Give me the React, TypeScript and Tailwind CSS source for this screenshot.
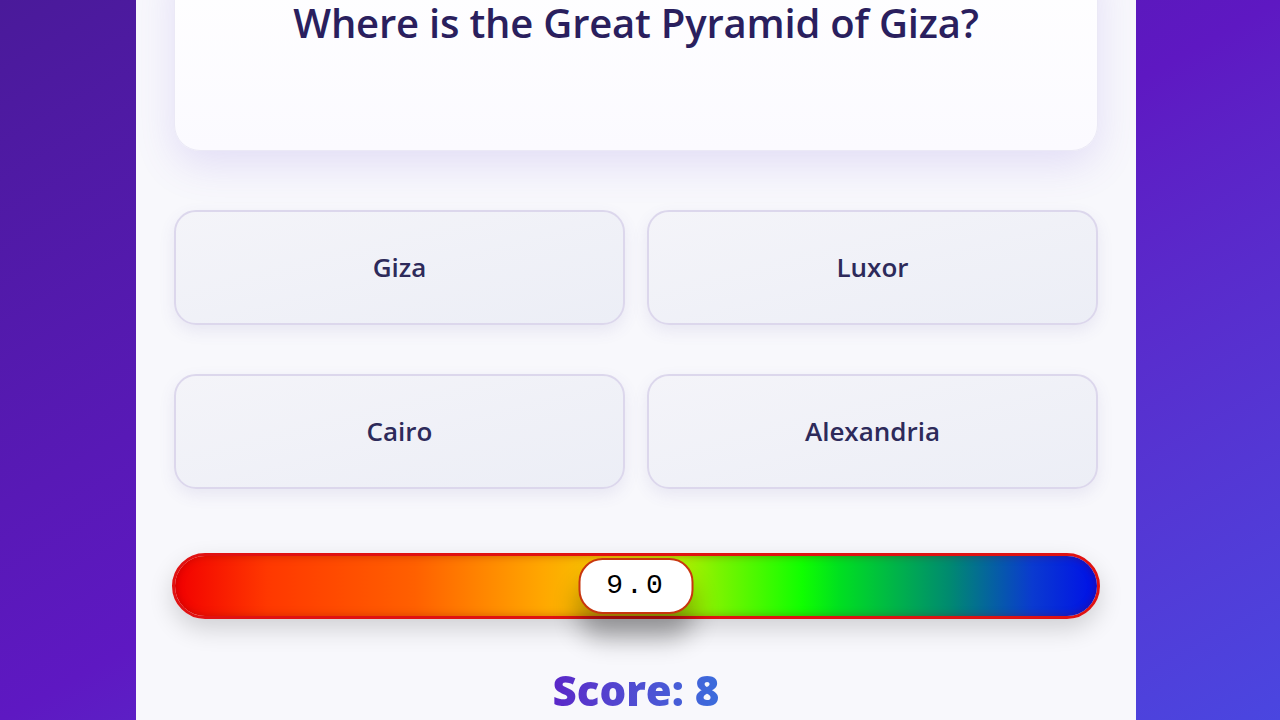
import React from "react";

const answers = ["Giza", "Luxor", "Cairo", "Alexandria"];

const barGradient =
  "linear-gradient(90deg, #f20000 0%, #ff3800 10%, #ff6000 26%, #ffa800 40%, #f4c800 47%, #b0ee00 55%, #7af400 59%, #10ff00 68%, #00e020 72%, #008a70 84%, #0a3ad0 93%, #0010e8 100%)";

export default function App() {
  return (
    <div
      className="h-[720px] w-full overflow-hidden bg-gradient-to-br from-[#4a1a9a] via-[#5e18c2] to-[#4a46e0]"
      style={{ fontFamily: '"Open Sans", "Noto Sans", sans-serif' }}
    >
      <div className="ml-[136px] flex h-full w-[1000px] flex-col bg-[#f8f8fc] px-[38px]">
        {/* question card, scrolled partly off the top */}
        <div className="-mt-[50px] h-[201px] rounded-[26px] border border-[#ebe9f6] bg-gradient-to-b from-white to-[#fbfaff] pt-[52px] text-center shadow-[0_14px_40px_rgba(120,90,220,0.16)]">
          <h1 className="text-[40px] font-semibold leading-[40px] tracking-[-0.2px] text-[#2a1f5e]">
            Where is the Great Pyramid of Giza?
          </h1>
        </div>

        <div className="mt-[59px] grid grid-cols-2 gap-x-[22px] gap-y-[49px]">
          {answers.map((a) => (
            <button
              key={a}
              className="flex h-[115px] items-center justify-center rounded-[22px] border-2 border-[#dcd7ec] bg-gradient-to-br from-[#f4f4f9] to-[#eceef6] text-[26px] font-semibold text-[#2d2a5a] shadow-[0_6px_16px_rgba(90,80,160,0.10)]"
            >
              {a}
            </button>
          ))}
        </div>

        <div className="relative -mx-[2px] mt-[64px] h-[66px] rounded-full border-[3px] border-[#e01212] shadow-[0_10px_24px_rgba(0,0,0,0.16)]">
          <div
            className="h-full w-full rounded-full shadow-[inset_0_0_8px_rgba(120,0,0,0.35)]"
            style={{ background: barGradient }}
          />
          <div className="absolute left-1/2 top-1/2 flex h-[56px] w-[115px] -translate-x-1/2 -translate-y-1/2 items-center justify-center rounded-[24px] border-2 border-[#c8360e] bg-white shadow-[0_24px_26px_rgba(0,0,0,0.32)]">
            <span
              className="text-[28px] tracking-[3px] text-black"
              style={{ fontFamily: '"Liberation Mono", "DejaVu Sans Mono", monospace' }}
            >
              9.0
            </span>
          </div>
        </div>

        <div className="mt-[48px] text-center">
          <span className="bg-gradient-to-r from-[#5a26c8] to-[#3a6cdc] bg-clip-text text-[42px] font-extrabold leading-[46px] text-transparent">
            Score: 8
          </span>
        </div>
      </div>
    </div>
  );
}
